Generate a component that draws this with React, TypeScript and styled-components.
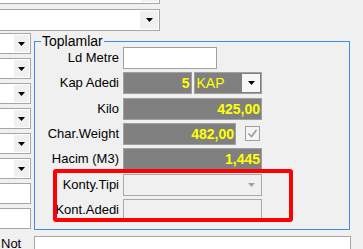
import React from "react";
import styled, { createGlobalStyle } from "styled-components";

const Global = createGlobalStyle`
  html, body { margin: 0; padding: 0; background: #f0f0f0; overflow: hidden; }
  body { font-family: "Liberation Sans", Arial, sans-serif; font-size: 13px; color: #000; }
`;

const Page = styled.div`
  width: 363px;
  height: 249px;
  overflow: hidden;
  display: flex;
  flex-direction: column;
  & > * { flex-shrink: 0; }
`;

const TopCombo = styled.div<{ $first?: boolean }>`
  box-sizing: border-box;
  width: 163px;
  height: 22px;
  margin-left: -3px;
  margin-top: ${(p) => (p.$first ? "-18px" : "5px")};
  background: #fff;
  border: 1px solid #a6a6a6;
  display: flex;
  justify-content: flex-end;
  padding: 1px;
`;

const ArrowButton = styled.div<{ $w: number; $bg?: string }>`
  width: ${(p) => p.$w}px;
  height: 100%;
  background: ${(p) => p.$bg ?? "#f0f0f0"};
  display: flex;
  align-items: center;
  justify-content: center;
  flex-shrink: 0;
`;

const Main = styled.div`
  display: flex;
  gap: 3px;
  margin-top: 2px;
`;

const LeftColumn = styled.div`
  width: 34px;
  margin-left: -3px;
  display: flex;
  flex-direction: column;
  gap: 4px;
`;

const SideCombo = styled.div`
  box-sizing: border-box;
  height: 21px;
  background: #fff;
  border: 1px solid #a6a6a6;
  display: flex;
  justify-content: flex-end;
  padding: 1px;
`;

const SideInput = styled.div`
  box-sizing: border-box;
  height: 21px;
  background: #fff;
  border: 1px solid #a6a6a6;
`;

const Group = styled.div`
  position: relative;
  box-sizing: border-box;
  width: 316px;
  height: 189px;
  margin-top: 8px;
  border: 1px solid #3d8ee6;
  padding-top: 5px;
`;

const GroupTitle = styled.span`
  position: absolute;
  top: -9px;
  left: 6px;
  padding: 0 1px;
  background: #f0f0f0;
  font-size: 14px;
  line-height: 16px;
`;

const Form = styled.div`
  display: grid;
  grid-template-columns: 84px 139px;
  column-gap: 4px;
  grid-auto-rows: 22px;
  row-gap: 3.33px;
`;

const Label = styled.div`
  align-self: center;
  text-align: right;
  white-space: nowrap;
  font-size: 13px;
  line-height: 16px;
`;

const Field = styled.div`
  display: flex;
  align-items: center;
  gap: 2px;
`;

const TextBox = styled.div<{ $w: number }>`
  box-sizing: border-box;
  width: ${(p) => p.$w}px;
  height: 22px;
  background: #fff;
  border: 1px solid #a0a0a0;
`;

const ValueBox = styled.div<{ $w: number }>`
  box-sizing: border-box;
  width: ${(p) => p.$w}px;
  height: 22px;
  background: #808080;
  border: 1px solid #a0a0a0;
  color: #ffff00;
  font-weight: bold;
  font-size: 14px;
  line-height: 20px;
  text-align: right;
  padding-right: 1px;
`;

const UnitCombo = styled.div`
  box-sizing: border-box;
  width: 69px;
  height: 22px;
  background: #808080;
  border: 1px solid #a0a0a0;
  color: #ffff00;
  font-size: 14px;
  display: flex;
  padding: 1px 1px 1px 2px;
`;

const UnitText = styled.span`
  flex: 1;
  line-height: 18px;
`;

const DisabledCombo = styled.div`
  box-sizing: border-box;
  width: 139px;
  height: 22px;
  background: #f0f0f0;
  border: 1px solid #a8a8a8;
  display: flex;
  justify-content: flex-end;
  padding: 1px;
`;

const DisabledInput = styled.div`
  box-sizing: border-box;
  width: 139px;
  height: 22px;
  background: #f0f0f0;
  border: 1px solid #a8a8a8;
`;

const Check = styled.div`
  box-sizing: border-box;
  width: 15px;
  height: 15px;
  margin-left: 7px;
  background: #f4f4f4;
  border: 1px solid #a0a0a0;
  display: flex;
  align-items: center;
  justify-content: center;
`;

const Highlight = styled.div`
  position: absolute;
  left: 18px;
  top: 127px;
  width: 240px;
  height: 53px;
  box-sizing: border-box;
  border: 4px solid #ff0000;
  border-radius: 3px;
  pointer-events: none;
`;

const NoteRow = styled.div`
  display: flex;
  gap: 11px;
  margin-top: 6px;
`;

const NoteLabel = styled.div`
  width: 22px;
  padding-left: 1px;
  font-size: 13px;
  line-height: 16px;
`;

const NoteInput = styled.div`
  box-sizing: border-box;
  width: 317px;
  height: 22px;
  background: #fff;
  border: 1px solid #a6a6a6;
`;

const Arrow = ({ color = "#000" }: { color?: string }) => (
  <svg width="7" height="4" viewBox="0 0 7 4">
    <polygon points="0,0 7,0 3.5,4" fill={color} />
  </svg>
);

const CheckMark = () => (
  <svg width="11" height="11" viewBox="0 0 11 11">
    <polyline points="1.5,5.5 4.5,8.5 9.5,2" fill="none" stroke="#9a9a9a" strokeWidth="1.6" />
  </svg>
);

export default function App() {
  return (
    <Page>
      <Global />
      <TopCombo $first>
        <ArrowButton $w={17}>
          <Arrow />
        </ArrowButton>
      </TopCombo>
      <TopCombo>
        <ArrowButton $w={18}>
          <Arrow />
        </ArrowButton>
      </TopCombo>
      <Main>
        <LeftColumn>
          {[0, 1, 2, 3, 4, 5].map((i) => (
            <SideCombo key={i}>
              <ArrowButton $w={15}>
                <Arrow />
              </ArrowButton>
            </SideCombo>
          ))}
          <SideInput />
          <SideInput />
        </LeftColumn>
        <Group>
          <GroupTitle>Toplamlar</GroupTitle>
          <Form>
            <Label>Ld Metre</Label>
            <Field>
              <TextBox $w={94} />
            </Field>
            <Label>Kap Adedi</Label>
            <Field>
              <ValueBox $w={69}>5</ValueBox>
              <UnitCombo>
                <UnitText>KAP</UnitText>
                <ArrowButton $w={18} $bg="#f7f7f7">
                  <Arrow />
                </ArrowButton>
              </UnitCombo>
            </Field>
            <Label>Kilo</Label>
            <Field>
              <ValueBox $w={139}>425,00</ValueBox>
            </Field>
            <Label>Char.Weight</Label>
            <Field>
              <ValueBox $w={113}>482,00</ValueBox>
              <Check>
                <CheckMark />
              </Check>
            </Field>
            <Label>Hacim (M3)</Label>
            <Field>
              <ValueBox $w={139}>1,445</ValueBox>
            </Field>
            <Label>Konty.Tipi</Label>
            <Field>
              <DisabledCombo>
                <ArrowButton $w={18}>
                  <Arrow color="#a0a0a0" />
                </ArrowButton>
              </DisabledCombo>
            </Field>
            <Label>Kont.Adedi</Label>
            <Field>
              <DisabledInput />
            </Field>
          </Form>
          <Highlight />
        </Group>
      </Main>
      <NoteRow>
        <NoteLabel>Not</NoteLabel>
        <NoteInput />
      </NoteRow>
    </Page>
  );
}
